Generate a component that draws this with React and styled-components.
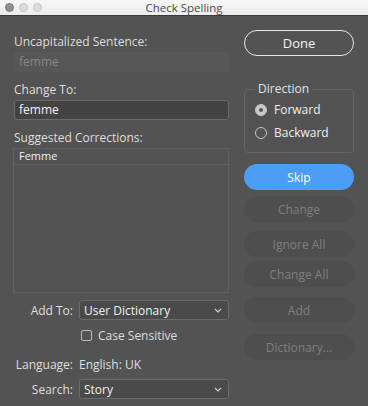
import React, { useState } from 'react';
import styled, { createGlobalStyle } from 'styled-components';

const Global = createGlobalStyle`
  html, body { margin: 0; padding: 0; background: #535353; }
  body { font-family: "Open Sans", "DejaVu Sans", sans-serif; font-weight: 500; -webkit-font-smoothing: antialiased; }
  * { box-sizing: border-box; }
`;

const Window = styled.div`
  width: 368px;
  height: 406px;
  background: #535353;
  overflow: hidden;
`;

const TitleBar = styled.div`
  height: 16px;
  background: linear-gradient(#f7f7f7, #ececec);
  border-bottom: 1px solid #3a3a3a;
  display: flex;
  align-items: center;
  position: relative;
`;

const Lights = styled.div`
  display: flex;
  gap: 5px;
  padding-left: 5px;
`;

const Light = styled.span`
  width: 9px;
  height: 9px;
  border-radius: 50%;
  background: ${p => (p.$active ? '#8f8f8f' : '#dcdcdc')};
  border: 1px solid ${p => (p.$active ? '#7a7a7a' : '#c6c6c6')};
`;

const Title = styled.div`
  position: absolute;
  left: 0;
  right: 0;
  text-align: center;
  font-size: 11.5px;
  font-weight: 400;
  color: #4a4a4a;
  line-height: 16px;
  pointer-events: none;
`;

const Body = styled.div`
  display: flex;
  gap: 15px;
  padding: 14px 14px 0 14px;
`;

const Left = styled.div`
  width: 215px;
  display: flex;
  flex-direction: column;
`;

const Right = styled.div`
  width: 110px;
  display: flex;
  flex-direction: column;
`;

const Label = styled.div`
  font-size: 12px;
  color: #dedede;
  line-height: 16px;
  margin-top: ${p => p.$mt || 0}px;
  margin-bottom: 2px;
`;

const Dim = styled.div`
  height: 20px;
  background: #575757;
  color: #858585;
  font-size: 12px;
  line-height: 20px;
  padding-left: 5px;
`;

const Input = styled.div`
  height: 20px;
  background: #434343;
  border: 1px solid #6a6a6a;
  border-radius: 3px;
  color: #f2f2f2;
  font-size: 12px;
  line-height: 18px;
  padding-left: 4px;
`;

const List = styled.div`
  height: 145px;
  border: 1px solid #606060;
  margin-left: -1px;
  display: flex;
  flex-direction: column;
`;

const ListItem = styled.div`
  height: 16px;
  border-bottom: 1px solid #606060;
  color: #f0f0f0;
  font-size: 11px;
  line-height: 14px;
  padding-left: 5px;
`;

const FormRow = styled.div`
  display: flex;
  align-items: center;
  gap: 6px;
  min-height: 16px;
  margin-top: ${p => p.$mt || 0}px;
`;

const RowLabel = styled.div`
  width: 59px;
  text-align: right;
  font-size: 12px;
  color: #dedede;
`;

const Select = styled.div`
  flex: 1;
  height: 20px;
  background: #4a4a4a;
  border: 1px solid #6a6a6a;
  border-radius: 3px;
  display: flex;
  align-items: center;
  justify-content: space-between;
  padding: 0 6px 0 4px;
  color: #f0f0f0;
  font-size: 12px;
`;

const Check = styled.span`
  width: 11px;
  height: 11px;
  border: 1px solid #bdbdbd;
  border-radius: 2px;
  margin-left: 67px;
`;

const Text = styled.span`
  font-size: 12px;
  color: #dedede;
`;

const Button = styled.div`
  height: 26px;
  border-radius: 13px;
  display: flex;
  align-items: center;
  justify-content: center;
  font-size: 12px;
  margin-top: ${p => p.$mt || 0}px;
  ${p =>
    p.$variant === 'outline'
      ? 'border: 1px solid #e6e6e6; color: #f4f4f4; font-size: 13px;'
      : p.$variant === 'primary'
      ? 'background: #4b9ef4; color: #ffffff;'
      : 'background: #4e4e4e; color: #7f7f7f;'}
`;

const Group = styled.fieldset`
  margin: 27px 0 0 0;
  padding: 3px 0 0 10px;
  border: 1px solid #646464;
  border-radius: 4px;
  height: 70px;
  min-width: 0;
`;

const Legend = styled.legend`
  font-size: 12px;
  color: #e2e2e2;
  padding: 0 3px;
  margin-left: 0;
  line-height: 12px;
`;

const RadioRow = styled.div`
  display: flex;
  align-items: center;
  gap: 7px;
  height: 23px;
  font-size: 12px;
  color: #eeeeee;
`;

const Radio = styled.span`
  width: 12px;
  height: 12px;
  border-radius: 50%;
  border: 1px solid #c4c4c4;
  background: ${p => (p.$on ? '#c9c9c9' : 'transparent')};
  display: flex;
  align-items: center;
  justify-content: center;
  &::after {
    content: '';
    width: 4px;
    height: 4px;
    border-radius: 50%;
    background: #555;
    display: ${p => (p.$on ? 'block' : 'none')};
  }
`;

const Chevron = () => (
  <svg width="8" height="5" viewBox="0 0 8 5">
    <path d="M1 1 L4 4 L7 1" fill="none" stroke="#d0d0d0" strokeWidth="1.1" />
  </svg>
);

export default function App() {
  const [dir, setDir] = useState('forward');
  return (
    <Window>
      <Global />
      <TitleBar>
        <Lights>
          <Light $active />
          <Light />
          <Light />
        </Lights>
        <Title>Check Spelling</Title>
      </TitleBar>
      <Body>
        <Left>
          <Label $mt={4}>Uncapitalized Sentence:</Label>
          <Dim>femme</Dim>
          <Label $mt={10}>Change To:</Label>
          <Input>femme</Input>
          <Label $mt={10}>Suggested Corrections:</Label>
          <List>
            <ListItem>Femme</ListItem>
          </List>
          <FormRow $mt={7}>
            <RowLabel>Add To:</RowLabel>
            <Select>
              User Dictionary
              <Chevron />
            </Select>
          </FormRow>
          <FormRow $mt={7}>
            <Check />
            <Text>Case Sensitive</Text>
          </FormRow>
          <FormRow $mt={12}>
            <RowLabel>Language:</RowLabel>
            <Text>English: UK</Text>
          </FormRow>
          <FormRow $mt={6}>
            <RowLabel>Search:</RowLabel>
            <Select>
              Story
              <Chevron />
            </Select>
          </FormRow>
        </Left>
        <Right>
          <Button $variant="outline">Done</Button>
          <Group>
            <Legend>Direction</Legend>
            <RadioRow onClick={() => setDir('forward')}>
              <Radio $on={dir === 'forward'} />
              Forward
            </RadioRow>
            <RadioRow onClick={() => setDir('backward')}>
              <Radio $on={dir === 'backward'} />
              Backward
            </RadioRow>
          </Group>
          <Button $variant="primary" $mt={11}>Skip</Button>
          <Button $mt={6}>Change</Button>
          <Button $mt={9}>Ignore All</Button>
          <Button $mt={4}>Change All</Button>
          <Button $mt={10}>Add</Button>
          <Button $mt={11}>Dictionary...</Button>
        </Right>
      </Body>
    </Window>
  );
}
